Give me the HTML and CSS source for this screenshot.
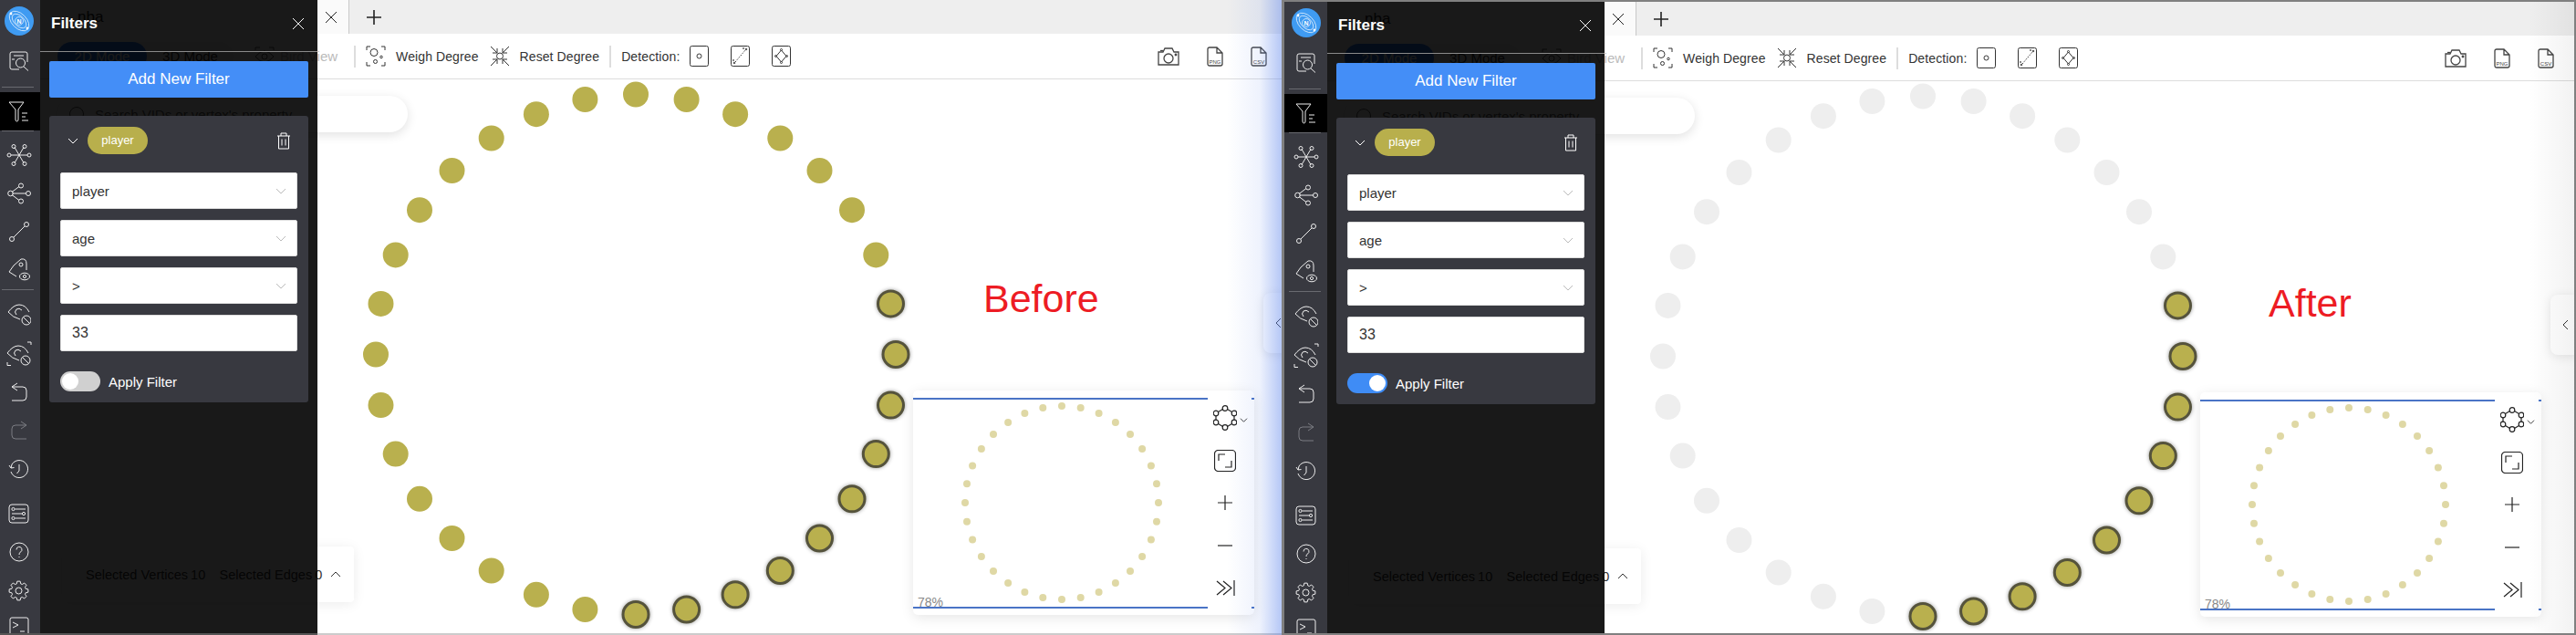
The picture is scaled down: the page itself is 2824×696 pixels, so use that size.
FILE: index.html
```html
<!DOCTYPE html>
<html lang="en">
<head>
<meta charset="utf-8">
<title>Filters: before and after</title>
<link rel="stylesheet" href="styles.css">
</head>
<body>
<svg class="sprite" aria-hidden="true">
  <defs>
    <symbol id="i-logo" viewBox="0 0 32 32">
      <circle class="logo-bg" cx="16" cy="16" r="16"/>
      <g class="logo-lines">
        <ellipse cx="16" cy="16" rx="13" ry="8" transform="rotate(45 16 16)"/>
        <ellipse cx="16" cy="16" rx="9.5" ry="5.5" transform="rotate(45 16 16)"/>
        <circle cx="16" cy="16" r="4.5"/>
      </g>
      <circle class="logo-dot" cx="7" cy="8" r="1.4"/>
      <circle class="logo-dot" cx="25" cy="24" r="1.4"/>
      <text class="logo-n" x="16" y="18.5">N</text>
    </symbol>
    <symbol id="i-search" viewBox="0 0 22 22">
      <path d="M11 20H3Q1 20 1 18V3Q1 1 3 1H18Q20 1 20 3V12"/>
      <path d="M5 5H16M3 9H6M16 17L21 21.5"/>
      <circle cx="12.5" cy="13" r="5"/>
    </symbol>
    <symbol id="i-filter" viewBox="0 0 24 23">
      <path d="M1 1H17L11 9V20Q11 22 9.5 22Q8 22 8 20V9Z"/>
      <path d="M15 13H21M15 17H19M15 21H22"/>
    </symbol>
    <symbol id="i-star" viewBox="0 0 28 24">
      <path d="M5 12H23M9 3.5L19 20.500M19 3.500L9 20.500"/>
      <circle cx="3" cy="12" r="2"/><circle cx="25" cy="12" r="2"/>
      <circle cx="8" cy="2.500" r="2"/><circle cx="20" cy="2.500" r="2"/>
      <circle cx="8" cy="21.500" r="2"/><circle cx="20" cy="21.500" r="2"/>
    </symbol>
    <symbol id="i-share" viewBox="0 0 26 24">
      <path d="M5.500 12H20.500M5 10.500L11 6Q12 5 13 4.500M5 13.500L11 18Q12 19 13 19.500"/>
      <circle cx="3.500" cy="12" r="2.800"/><circle cx="15" cy="3.500" r="2.500"/>
      <circle cx="23" cy="12" r="2.500"/><circle cx="15" cy="20.500" r="2.500"/>
    </symbol>
    <symbol id="i-edge" viewBox="0 0 24 24">
      <circle cx="4" cy="20" r="2.500"/><circle cx="20" cy="4" r="2.500"/>
      <path d="M6 18L18 6"/>
    </symbol>
    <symbol id="i-tag" viewBox="0 0 24 26">
      <path d="M14 1L6 8L1 15L9 20M14 1Q20 0 20 6V13"/>
      <circle cx="14" cy="7" r="2"/>
      <ellipse cx="18" cy="20" rx="5.500" ry="3.800"/>
      <circle cx="18" cy="20" r="1.600"/>
    </symbol>
    <symbol id="i-eyeban" viewBox="0 0 26 24">
      <path d="M1 9Q7 1 13 1Q20 1 24 9M1 9Q6 15 14 17M16 7Q13 4 10 6Q7 9 10 12"/>
      <circle cx="21" cy="18" r="5"/>
      <path d="M17.500 14.500L24.500 21.500"/>
    </symbol>
    <symbol id="i-eyeban2" viewBox="0 0 28 27">
      <path d="M1 13Q7 5 13 5Q20 5 24 13M1 13Q6 19 14 21M16 11Q13 8 10 10Q7 13 10 16"/>
      <circle cx="21" cy="21" r="5"/>
      <path d="M17.500 17.500L24.500 24.500M23 1H27V4M1 23V26.500H5"/>
    </symbol>
    <symbol id="i-undo" viewBox="0 0 18 21">
      <path d="M7 1L1 5L7 9M1 5H13Q17 5 17 9V16Q17 20 13 20H1"/>
    </symbol>
    <symbol id="i-redo" viewBox="0 0 18 21">
      <path d="M11 1L17 5L11 9M17 5H5Q1 5 1 9V16Q1 20 5 20H17"/>
    </symbol>
    <symbol id="i-history" viewBox="0 0 23 22">
      <path d="M3 13A9.500 9.500 0 1 0 4 5L3 9M3 9L6.500 8.500M3 9L1 6"/>
      <path d="M12 5V12L9.500 15"/>
    </symbol>
    <symbol id="i-settings" viewBox="0 0 23 22">
      <rect x="1" y="1" width="21" height="20" rx="3"/>
      <path d="M7.500 6H19M4 11H15M7.500 16H19"/>
      <circle cx="5.500" cy="6" r="1.600"/><circle cx="17" cy="11" r="1.600"/><circle cx="5.500" cy="16" r="1.600"/>
    </symbol>
    <symbol id="i-help" viewBox="0 0 22 22">
      <circle cx="11" cy="11" r="10"/>
      <path d="M8 8.500A3 3 0 1 1 12.500 11Q11 12 11 14M11 16V17"/>
    </symbol>
    <symbol id="i-gear" viewBox="-11.500 -11.500 23 23">
      <polygon points="7.690,-2.200 10.370,-1.640 10.370,1.640 7.690,2.200 7,3.880 8.490,6.170 6.170,8.490 3.880,7 2.200,7.690 1.640,10.370 -1.640,10.370 -2.200,7.690 -3.880,7 -6.170,8.490 -8.490,6.170 -7,3.880 -7.690,2.200 -10.370,1.640 -10.370,-1.640 -7.690,-2.200 -7,-3.880 -8.490,-6.170 -6.170,-8.490 -3.880,-7 -2.200,-7.690 -1.640,-10.370 1.640,-10.370 2.200,-7.690 3.880,-7 6.170,-8.490 8.490,-6.170 7,-3.880"/>
      <circle r="3.500"/>
    </symbol>
    <symbol id="i-term" viewBox="0 0 22 26">
      <rect x="1" y="1" width="20" height="24" rx="2"/>
      <path d="M4 6L10 9L4 12M12 16H17"/>
    </symbol>
    <symbol id="i-close" viewBox="0 0 14 14"><path d="M1 1L13 13M13 1L1 13"/></symbol>
    <symbol id="i-plus" viewBox="0 0 16 16"><path d="M8 0V16M0 8H16"/></symbol>
    <symbol id="i-minus" viewBox="0 0 16 16"><path d="M0 8H16"/></symbol>
    <symbol id="i-down" viewBox="0 0 12 7"><path d="M1 1L6 6L11 1"/></symbol>
    <symbol id="i-up" viewBox="0 0 12 7"><path d="M1 6L6 1L11 6"/></symbol>
    <symbol id="i-left" viewBox="0 0 7 12"><path d="M6 1L1 6L6 11"/></symbol>
    <symbol id="i-trash" viewBox="0 0 14 19">
      <path d="M0 4H14M4 4V1H10V4M1.500 4V18H12.500V4M5 7.500V14.500M9 7.500V14.500"/>
    </symbol>
    <symbol id="i-eye" viewBox="0 0 22 22">
      <path d="M1 11Q6 5 11 5Q16 5 21 11Q16 17 11 17Q6 17 1 11Z"/>
      <circle cx="11" cy="11" r="3"/>
      <path d="M1 4V1H6M16 1H21V4M1 18V21H6M16 21H21V18"/>
    </symbol>
    <symbol id="i-weigh" viewBox="0 0 22 23">
      <path d="M1 5V1H5M17 1H21V5M1 18V22H5M17 22H21V18"/>
      <circle cx="9" cy="7.500" r="4"/><circle cx="17" cy="12.500" r="1.300"/><circle cx="10.500" cy="17.500" r="2"/>
    </symbol>
    <symbol id="i-reset" viewBox="0 0 22 23">
      <circle cx="11" cy="11.500" r="3.500"/>
      <path d="M1 1L8 8M8 3V8H3M21 1L14 8M14 3V8H19M1 22L8 15M8 20V15H3M21 22L14 15M14 20V15H19"/>
    </symbol>
    <symbol id="i-det1" viewBox="0 0 21 23">
      <rect x="0.500" y="0.500" width="20" height="22" rx="2"/><circle cx="10.500" cy="11.500" r="2.500"/>
    </symbol>
    <symbol id="i-det2" viewBox="0 0 21 23">
      <rect x="0.500" y="0.500" width="20" height="22" rx="2"/>
      <path class="det-line" d="M5 18L16 5"/><circle cx="4" cy="19" r="0.800"/><circle cx="17" cy="4" r="0.800"/><circle cx="14" cy="3" r="0.500"/><circle cx="3" cy="16" r="0.500"/>
    </symbol>
    <symbol id="i-det3" viewBox="0 0 21 23">
      <rect x="0.500" y="0.500" width="20" height="22" rx="2"/>
      <path d="M10.500 5L16 11.500L10.500 18L5 11.500Z"/>
      <circle cx="10.500" cy="4.500" r="1"/><circle cx="16.500" cy="11.500" r="1"/><circle cx="10.500" cy="18.500" r="1"/><circle cx="4.500" cy="11.500" r="1"/>
    </symbol>
    <symbol id="i-camera" viewBox="0 0 24 20">
      <path d="M1 5H6L8 1H16L18 5H23V19H1Z"/><circle cx="12" cy="12" r="5"/><circle cx="20" cy="8" r="0.800"/><path d="M3 3.500H6"/>
    </symbol>
    <symbol id="i-png" viewBox="0 0 18 22">
      <path d="M3 1H11L17 7V19Q17 21 15 21H3Q1 21 1 19V3Q1 1 3 1ZM11 1V7H17"/>
      <text class="file-text" x="9" y="18.500">PNG</text>
    </symbol>
    <symbol id="i-csv" viewBox="0 0 18 22">
      <path d="M3 1H11L17 7V19Q17 21 15 21H3Q1 21 1 19V3Q1 1 3 1ZM11 1V7H17"/>
      <text class="file-text" x="9" y="18.500">CSV</text>
    </symbol>
    <symbol id="i-layout" viewBox="0 0 26 28">
      <path d="M13 3L23 9V19L13 25L3 19V9Z"/>
      <g class="layout-dots">
        <circle cx="13" cy="3.500" r="2.800"/><circle cx="23" cy="9" r="2.800"/><circle cx="23" cy="19" r="2.800"/>
        <circle cx="13" cy="24.500" r="2.800"/><circle cx="3" cy="19" r="2.800"/><circle cx="3" cy="9" r="2.800"/>
      </g>
    </symbol>
    <symbol id="i-fit" viewBox="0 0 24 24">
      <rect x="0.500" y="0.500" width="23" height="23" rx="4"/>
      <path d="M5 12V5H12M19 12V19H12"/>
    </symbol>
    <symbol id="i-end" viewBox="0 0 21 17">
      <path d="M1 1L10 8.500L1 16M8 1L17 8.500L8 16M20 0V17"/>
    </symbol>

    <g id="ring-plain">
      <circle cx="0" cy="-285" r="14"/><circle cx="55.600" cy="-279.500" r="14"/><circle cx="109.100" cy="-263.300" r="14"/>
      <circle cx="158.300" cy="-237" r="14"/><circle cx="201.500" cy="-201.500" r="14"/><circle cx="237" cy="-158.300" r="14"/>
      <circle cx="263.300" cy="-109.100" r="14"/><circle cx="-55.600" cy="279.500" r="14"/><circle cx="-109.100" cy="263.300" r="14"/>
      <circle cx="-158.300" cy="237" r="14"/><circle cx="-201.500" cy="201.500" r="14"/><circle cx="-237" cy="158.300" r="14"/>
      <circle cx="-263.300" cy="109.100" r="14"/><circle cx="-279.500" cy="55.600" r="14"/><circle cx="-285" cy="0" r="14"/>
      <circle cx="-279.500" cy="-55.600" r="14"/><circle cx="-263.300" cy="-109.100" r="14"/><circle cx="-237" cy="-158.300" r="14"/>
      <circle cx="-201.500" cy="-201.500" r="14"/><circle cx="-158.300" cy="-237" r="14"/><circle cx="-109.100" cy="-263.300" r="14"/>
      <circle cx="-55.600" cy="-279.500" r="14"/>
    </g>
    <g id="ring-selected">
      <circle cx="279.500" cy="-55.600" r="14"/><circle cx="285" cy="0" r="14"/><circle cx="279.500" cy="55.600" r="14"/>
      <circle cx="263.300" cy="109.100" r="14"/><circle cx="237" cy="158.300" r="14"/><circle cx="201.500" cy="201.500" r="14"/>
      <circle cx="158.300" cy="237" r="14"/><circle cx="109.100" cy="263.300" r="14"/><circle cx="55.600" cy="279.500" r="14"/>
      <circle cx="0" cy="285" r="14"/>
    </g>
    <g id="ring-mini">
      <circle cx="0" cy="-106" r="4"/><circle cx="20.700" cy="-104" r="4"/><circle cx="40.600" cy="-97.900" r="4"/><circle cx="58.900" cy="-88.100" r="4"/>
      <circle cx="75" cy="-75" r="4"/><circle cx="88.100" cy="-58.900" r="4"/><circle cx="97.900" cy="-40.600" r="4"/><circle cx="104" cy="-20.700" r="4"/>
      <circle cx="106" cy="0" r="4"/><circle cx="104" cy="20.700" r="4"/><circle cx="97.900" cy="40.600" r="4"/><circle cx="88.100" cy="58.900" r="4"/>
      <circle cx="75" cy="75" r="4"/><circle cx="58.900" cy="88.100" r="4"/><circle cx="40.600" cy="97.900" r="4"/><circle cx="20.700" cy="104" r="4"/>
      <circle cx="0" cy="106" r="4"/><circle cx="-20.700" cy="104" r="4"/><circle cx="-40.600" cy="97.900" r="4"/><circle cx="-58.900" cy="88.100" r="4"/>
      <circle cx="-75" cy="75" r="4"/><circle cx="-88.100" cy="58.900" r="4"/><circle cx="-97.900" cy="40.600" r="4"/><circle cx="-104" cy="20.700" r="4"/>
      <circle cx="-106" cy="0" r="4"/><circle cx="-104" cy="-20.700" r="4"/><circle cx="-97.900" cy="-40.600" r="4"/><circle cx="-88.100" cy="-58.900" r="4"/>
      <circle cx="-75" cy="-75" r="4"/><circle cx="-58.900" cy="-88.100" r="4"/><circle cx="-40.600" cy="-97.900" r="4"/><circle cx="-20.700" cy="-104" r="4"/>
    </g>
  </defs>
</svg>

<section class="shot shot-before">
  <div class="app">
    <nav class="rail">
      <div class="rail-logo"><svg class="logo"><use href="#i-logo"/></svg></div>
      <div class="rail-item"><svg class="ic w22 h22"><use href="#i-search"/></svg></div>
      <hr class="rail-sep rail-sep-a">
      <div class="rail-item rail-active"><svg class="ic w24 h23"><use href="#i-filter"/></svg></div>
      <hr class="rail-sep rail-sep-b">
      <div class="rail-item rail-first"><svg class="ic w28 h24"><use href="#i-star"/></svg></div>
      <div class="rail-item"><svg class="ic w26 h24"><use href="#i-share"/></svg></div>
      <div class="rail-item"><svg class="ic w24 h24"><use href="#i-edge"/></svg></div>
      <div class="rail-item"><svg class="ic w24 h26"><use href="#i-tag"/></svg></div>
      <hr class="rail-sep rail-sep-c">
      <div class="rail-item"><svg class="ic w26 h24"><use href="#i-eyeban"/></svg></div>
      <div class="rail-item"><svg class="ic w28 h27"><use href="#i-eyeban2"/></svg></div>
      <div class="rail-item"><svg class="ic w18 h21"><use href="#i-undo"/></svg></div>
      <div class="rail-item rail-off"><svg class="ic w18 h21"><use href="#i-redo"/></svg></div>
      <div class="rail-item rail-history"><svg class="ic w23 h22"><use href="#i-history"/></svg></div>
      <div class="rail-item rail-settings"><svg class="ic w23 h22"><use href="#i-settings"/></svg></div>
      <div class="rail-item"><svg class="ic w22 h22"><use href="#i-help"/></svg></div>
      <div class="rail-item"><svg class="ic w23 h23"><use href="#i-gear"/></svg></div>
      <div class="rail-item"><svg class="ic w22 h26"><use href="#i-term"/></svg></div>
    </nav>

    <main class="main">
      <div class="tabs">
        <div class="tab"><span class="tab-name">nba</span><svg class="ic w14 h14"><use href="#i-close"/></svg></div>
        <svg class="ic w16 h16 tab-add"><use href="#i-plus"/></svg>
      </div>
      <div class="toolbar">
        <div class="modes"><span class="mode mode-on">2D Mode</span><span class="mode">3D Mode</span></div>
        <svg class="ic w22 h22 bird-icon"><use href="#i-eye"/></svg>
        <span class="bird">Bird View</span>
        <i class="tool-sep tool-sep-a"></i>
        <svg class="ic w22 h23"><use href="#i-weigh"/></svg>
        <span class="tool-text">Weigh Degree</span>
        <svg class="ic w22 h23"><use href="#i-reset"/></svg>
        <span class="tool-text tool-text-last">Reset Degree</span>
        <i class="tool-sep"></i>
        <span class="tool-label">Detection:</span>
        <svg class="ic w21 h23"><use href="#i-det1"/></svg>
        <svg class="ic w21 h23 det"><use href="#i-det2"/></svg>
        <svg class="ic w21 h23 det"><use href="#i-det3"/></svg>
        <div class="exports">
          <svg class="ic w24 h20 export-ic"><use href="#i-camera"/></svg>
          <svg class="ic w18 h22 export-ic"><use href="#i-png"/></svg>
          <svg class="ic w18 h22 export-ic"><use href="#i-csv"/></svg>
        </div>
      </div>
    </main>

    <svg class="graph graph-before">
      <use class="node-plain" href="#ring-plain" x="700" y="388.500"/>
      <use class="node-selected" href="#ring-selected" x="700" y="388.500"/>
    </svg>

    <div class="search"><i class="search-ring"></i><span>Search VIDs or vertex's property</span></div>
    <div class="note note-before">Before</div>
    <div class="side-tab"><svg class="ic w7 h12"><use href="#i-left"/></svg></div>
    <div class="selection">
      <span>Selected Vertices</span><b>10</b>
      <span class="selection-edges">Selected Edges</span><b>0</b>
      <svg class="ic w12 h7 selection-up"><use href="#i-up"/></svg>
    </div>

    <div class="minimap">
      <svg class="mini-graph"><use class="mini-dots" href="#ring-mini" x="163" y="123"/></svg>
      <i class="view-line view-line-top"></i><i class="view-line view-line-bottom"></i>
      <span class="zoom-level">78%</span>
      <div class="mini-tools">
        <div class="mini-tool"><svg class="ic w26 h28"><use href="#i-layout"/></svg><svg class="ic w9 h5 mini-caret"><use href="#i-down"/></svg></div>
        <div class="mini-tool"><svg class="ic w24 h24"><use href="#i-fit"/></svg></div>
        <div class="mini-tool"><svg class="ic w16 h16"><use href="#i-plus"/></svg></div>
        <div class="mini-tool"><svg class="ic w16 h16"><use href="#i-minus"/></svg></div>
        <div class="mini-tool"><svg class="ic w21 h17"><use href="#i-end"/></svg></div>
      </div>
    </div>

    <aside class="drawer">
      <header class="drawer-head"><h2>Filters</h2><svg class="ic w14 h14"><use href="#i-close"/></svg></header>
      <div class="drawer-body">
        <button class="add-filter">Add New Filter</button>
        <div class="filter-card">
          <div class="filter-head">
            <svg class="ic w12 h7"><use href="#i-down"/></svg>
            <span class="pill">player</span>
            <svg class="ic w14 h19 trash"><use href="#i-trash"/></svg>
          </div>
          <div class="field"><span>player</span><svg class="ic w12 h7 caret"><use href="#i-down"/></svg></div>
          <div class="field"><span>age</span><svg class="ic w12 h7 caret"><use href="#i-down"/></svg></div>
          <div class="field"><span>&gt;</span><svg class="ic w12 h7 caret"><use href="#i-down"/></svg></div>
          <div class="field field-value"><span>33</span></div>
          <div class="apply"><span class="switch"><i></i></span><span>Apply Filter</span></div>
        </div>
      </div>
    </aside>
  </div>
</section>

<section class="shot shot-after">
  <div class="app">
    <nav class="rail">
      <div class="rail-logo"><svg class="logo"><use href="#i-logo"/></svg></div>
      <div class="rail-item"><svg class="ic w22 h22"><use href="#i-search"/></svg></div>
      <hr class="rail-sep rail-sep-a">
      <div class="rail-item rail-active"><svg class="ic w24 h23"><use href="#i-filter"/></svg></div>
      <hr class="rail-sep rail-sep-b">
      <div class="rail-item rail-first"><svg class="ic w28 h24"><use href="#i-star"/></svg></div>
      <div class="rail-item"><svg class="ic w26 h24"><use href="#i-share"/></svg></div>
      <div class="rail-item"><svg class="ic w24 h24"><use href="#i-edge"/></svg></div>
      <div class="rail-item"><svg class="ic w24 h26"><use href="#i-tag"/></svg></div>
      <hr class="rail-sep rail-sep-c">
      <div class="rail-item"><svg class="ic w26 h24"><use href="#i-eyeban"/></svg></div>
      <div class="rail-item"><svg class="ic w28 h27"><use href="#i-eyeban2"/></svg></div>
      <div class="rail-item"><svg class="ic w18 h21"><use href="#i-undo"/></svg></div>
      <div class="rail-item rail-off"><svg class="ic w18 h21"><use href="#i-redo"/></svg></div>
      <div class="rail-item rail-history"><svg class="ic w23 h22"><use href="#i-history"/></svg></div>
      <div class="rail-item rail-settings"><svg class="ic w23 h22"><use href="#i-settings"/></svg></div>
      <div class="rail-item"><svg class="ic w22 h22"><use href="#i-help"/></svg></div>
      <div class="rail-item"><svg class="ic w23 h23"><use href="#i-gear"/></svg></div>
      <div class="rail-item"><svg class="ic w22 h26"><use href="#i-term"/></svg></div>
    </nav>

    <main class="main">
      <div class="tabs">
        <div class="tab"><span class="tab-name">nba</span><svg class="ic w14 h14"><use href="#i-close"/></svg></div>
        <svg class="ic w16 h16 tab-add"><use href="#i-plus"/></svg>
      </div>
      <div class="toolbar">
        <div class="modes"><span class="mode mode-on">2D Mode</span><span class="mode">3D Mode</span></div>
        <svg class="ic w22 h22 bird-icon"><use href="#i-eye"/></svg>
        <span class="bird">Bird View</span>
        <i class="tool-sep tool-sep-a"></i>
        <svg class="ic w22 h23"><use href="#i-weigh"/></svg>
        <span class="tool-text">Weigh Degree</span>
        <svg class="ic w22 h23"><use href="#i-reset"/></svg>
        <span class="tool-text tool-text-last">Reset Degree</span>
        <i class="tool-sep"></i>
        <span class="tool-label">Detection:</span>
        <svg class="ic w21 h23"><use href="#i-det1"/></svg>
        <svg class="ic w21 h23 det"><use href="#i-det2"/></svg>
        <svg class="ic w21 h23 det"><use href="#i-det3"/></svg>
        <div class="exports">
          <svg class="ic w24 h20 export-ic"><use href="#i-camera"/></svg>
          <svg class="ic w18 h22 export-ic"><use href="#i-png"/></svg>
          <svg class="ic w18 h22 export-ic"><use href="#i-csv"/></svg>
        </div>
      </div>
    </main>

    <svg class="graph graph-after">
      <use class="node-plain" href="#ring-plain" x="700" y="388.500"/>
      <use class="node-selected" href="#ring-selected" x="700" y="388.500"/>
    </svg>

    <div class="search"><i class="search-ring"></i><span>Search VIDs or vertex's property</span></div>
    <div class="note note-after">After</div>
    <div class="side-tab"><svg class="ic w7 h12"><use href="#i-left"/></svg></div>
    <div class="selection">
      <span>Selected Vertices</span><b>10</b>
      <span class="selection-edges">Selected Edges</span><b>0</b>
      <svg class="ic w12 h7 selection-up"><use href="#i-up"/></svg>
    </div>

    <div class="minimap">
      <svg class="mini-graph"><use class="mini-dots" href="#ring-mini" x="163" y="123"/></svg>
      <i class="view-line view-line-top"></i><i class="view-line view-line-bottom"></i>
      <span class="zoom-level">78%</span>
      <div class="mini-tools">
        <div class="mini-tool"><svg class="ic w26 h28"><use href="#i-layout"/></svg><svg class="ic w9 h5 mini-caret"><use href="#i-down"/></svg></div>
        <div class="mini-tool"><svg class="ic w24 h24"><use href="#i-fit"/></svg></div>
        <div class="mini-tool"><svg class="ic w16 h16"><use href="#i-plus"/></svg></div>
        <div class="mini-tool"><svg class="ic w16 h16"><use href="#i-minus"/></svg></div>
        <div class="mini-tool"><svg class="ic w21 h17"><use href="#i-end"/></svg></div>
      </div>
    </div>

    <aside class="drawer">
      <header class="drawer-head"><h2>Filters</h2><svg class="ic w14 h14"><use href="#i-close"/></svg></header>
      <div class="drawer-body">
        <button class="add-filter">Add New Filter</button>
        <div class="filter-card">
          <div class="filter-head">
            <svg class="ic w12 h7"><use href="#i-down"/></svg>
            <span class="pill">player</span>
            <svg class="ic w14 h19 trash"><use href="#i-trash"/></svg>
          </div>
          <div class="field"><span>player</span><svg class="ic w12 h7 caret"><use href="#i-down"/></svg></div>
          <div class="field"><span>age</span><svg class="ic w12 h7 caret"><use href="#i-down"/></svg></div>
          <div class="field"><span>&gt;</span><svg class="ic w12 h7 caret"><use href="#i-down"/></svg></div>
          <div class="field field-value"><span>33</span></div>
          <div class="apply"><span class="switch switch-on"><i></i></span><span>Apply Filter</span></div>
        </div>
      </div>
    </aside>
  </div>
</section>
</body>
</html>
```
FILE: styles.css
```css
* { box-sizing: border-box; }
html, body { margin: 0; height: 100%; }
body {
  display: flex;
  width: 2824px;
  height: 696px;
  overflow: hidden;
  background: #fff;
  font-family: "Liberation Sans", Arial, sans-serif;
  color: #333;
}
.sprite { position: absolute; width: 0; height: 0; }

/* the two pasted screenshots */
.shot { position: relative; height: 696px; overflow: hidden; flex: none; }
.shot::after { content: ""; position: absolute; top: 0; bottom: 0; right: 0; pointer-events: none; z-index: 9; }
.shot-before { width: 1405px; background: linear-gradient(to right, #555 348px, #ccc 348px); }
.shot-before::after { width: 60px; background: linear-gradient(to right, rgba(90, 130, 235, 0), rgba(90, 130, 235, .1) 60%, rgba(90, 130, 235, .45)); }
.shot-before .app { margin-left: -3px; height: 694px; }
.shot-after { width: 1419px; border: solid #808080; border-width: 2px 2px 2px 3px; }
.shot-after::after { width: 50px; background: linear-gradient(to right, rgba(0, 0, 0, 0), rgba(0, 0, 0, .05)); }
.shot-after .app { height: 692px; }

.app { position: relative; display: flex; width: 1414px; background: #fff; overflow: hidden; }

/* generic icon */
.ic { display: block; flex: none; fill: none; stroke: currentColor; stroke-width: 1; overflow: visible; }
.w7 { width: 7px; } .w9 { width: 9px; } .w12 { width: 12px; } .w14 { width: 14px; } .w16 { width: 16px; }
.w18 { width: 18px; } .w21 { width: 21px; } .w22 { width: 22px; } .w23 { width: 23px; } .w24 { width: 24px; }
.w26 { width: 26px; } .w28 { width: 28px; }
.h5 { height: 5px; } .h7 { height: 7px; } .h12 { height: 12px; } .h14 { height: 14px; } .h16 { height: 16px; }
.h17 { height: 17px; } .h19 { height: 19px; } .h20 { height: 20px; } .h21 { height: 21px; } .h22 { height: 22px; }
.h23 { height: 23px; } .h24 { height: 24px; } .h26 { height: 26px; } .h27 { height: 27px; } .h28 { height: 28px; }

/* left rail */
.rail {
  position: relative;
  z-index: 5;
  flex: none;
  width: 47px;
  background: #383940;
  color: #eee;
  overflow: hidden;
}
.rail-logo { height: 46px; display: flex; align-items: center; justify-content: center; }
.logo { width: 32px; height: 32px; display: block; fill: none; }
.logo-bg { fill: #3f9bf2; stroke: none; }
.logo-lines { stroke: #fff; stroke-width: .8; opacity: .85; }
.logo-dot { fill: #fff; stroke: none; }
.logo-n { fill: #fff; stroke: none; font: 700 7px "Liberation Sans", sans-serif; text-anchor: middle; }
.rail-item { height: 42px; display: flex; align-items: center; justify-content: center; }
.rail-sep { display: block; height: 1px; margin: 0 7px 0 5px; border: 0; background: #696a70; }
.rail-sep-a { margin-top: 7px; margin-bottom: 5px; }
.rail-sep-b { margin-top: 0; }
.rail-sep-c { margin-top: 0; margin-bottom: 6px; }
.rail-active { background: #000; }
.rail-first { margin-top: 5px; }
.rail-off { color: #7b7c82; }
.rail-history { margin-top: 2px; }
.rail-settings { margin-top: 6px; }

/* main column beneath the drawer */
.main { flex: 1; min-width: 0; display: flex; flex-direction: column; }
.tabs { flex: none; height: 37px; display: flex; align-items: center; background: #eee; color: #222; }
.tab {
  width: 339px;
  height: 37px;
  display: flex;
  align-items: center;
  justify-content: space-between;
  padding: 0 12px 0 41px;
  background: #fafafa;
  border-right: 1px solid #c9c9c9;
  color: #222;
}
.tab-name { font-size: 17px; }
.tab-add { margin-left: 19px; stroke-width: 1.6; }

.toolbar {
  flex: none;
  height: 50px;
  display: flex;
  align-items: center;
  padding: 0 22px 0 19px;
  border-bottom: 1px solid #ddd;
  font-size: 14px;
  color: #333;
}
.modes { display: flex; align-items: center; height: 31px; border-radius: 16px; background: #f3f3f3; }
.mode { width: 95px; height: 31px; line-height: 31px; text-align: center; font-size: 15px; border-radius: 16px; }
.mode-on { width: 98px; background: #2f7cf0; color: #fff; }
.bird-icon { margin-left: 23px; color: #555; }
.bird { margin-left: 6px; font-size: 15px; color: #bbb; white-space: nowrap; }
.tool-sep { display: block; flex: none; width: 2px; height: 24px; margin: 0 11px; background: #ddd; }
.tool-sep-a { margin-left: 18px; }
.tool-text { margin: 0 12px 0 11px; letter-spacing: .1px; white-space: nowrap; }
.tool-text-last { margin-right: 0; }
.tool-label { margin-right: 11px; letter-spacing: .13px; }
.det { margin-left: 24px; }
.det-line { stroke-dasharray: 1.5 1.5; }
.exports { margin-left: auto; display: flex; align-items: center; gap: 30px; color: #444; }
.export-ic { stroke-width: 1.3; }
.file-text { fill: #444; stroke: none; font: 400 6px "Liberation Sans", sans-serif; text-anchor: middle; }

/* canvas */
.graph { position: absolute; left: 0; top: 0; width: 1414px; height: 694px; pointer-events: none; overflow: hidden; }
.node-plain { fill: #b9b04e; }
.graph-after .node-plain { fill: #eee; }
.node-selected { fill: #b9b04e; stroke: #55533c; stroke-width: 3; filter: drop-shadow(0 0 2px rgba(0, 0, 0, .4)); }

.search {
  position: absolute;
  left: 66px;
  top: 105px;
  width: 384px;
  height: 40px;
  display: flex;
  align-items: center;
  gap: 12px;
  padding-left: 13px;
  background: #fff;
  border-radius: 20px;
  box-shadow: 0 3px 12px rgba(0, 0, 0, .12);
  font-size: 15px;
  color: #666;
}
.search-ring { width: 16px; height: 16px; border: 1px solid #555; border-radius: 50%; }

.note { position: absolute; top: 302px; font-size: 43px; line-height: 50px; color: #ed1c24; }
.note-before { left: 1081px; }
.note-after { left: 1079px; top: 305px; }

.side-tab {
  position: absolute;
  left: 1388px;
  top: 321px;
  width: 30px;
  height: 66px;
  display: flex;
  align-items: center;
  padding-left: 13px;
  background: #fff;
  border-radius: 8px 0 0 8px;
  box-shadow: 0 2px 12px rgba(0, 0, 0, .1);
  color: #333;
}

.selection {
  position: absolute;
  left: 71px;
  top: 599px;
  width: 320px;
  height: 61px;
  display: flex;
  align-items: center;
  padding-left: 26px;
  background: #fff;
  border-radius: 4px;
  box-shadow: 0 2px 14px rgba(0, 0, 0, .08);
  font-size: 14.5px;
  color: #333;
}
.selection b { margin-left: 3px; font-weight: 400; letter-spacing: .2px; }
.selection-edges { margin-left: 15px; }
.selection-up { margin-left: 9px; }

.minimap {
  position: absolute;
  left: 1004px;
  top: 428px;
  width: 374px;
  height: 246px;
  background: #fff;
  border-radius: 5px;
  box-shadow: 0 3px 14px rgba(0, 0, 0, .1);
}
.mini-graph { position: absolute; left: 0; top: 0; width: 323px; height: 246px; }
.mini-dots { fill: #dfd8a5; }
.view-line { position: absolute; left: 0; right: 0; height: 2px; background: #4a74c6; }
.view-line-top { top: 8px; }
.view-line-bottom { top: 237px; }
.zoom-level { position: absolute; left: 5px; top: 224px; font-size: 14px; line-height: 16px; color: #888; }
.mini-tools {
  position: absolute;
  left: 323px;
  top: 6px;
  width: 48px;
  height: 236px;
  padding: 1px 10px 0 0;
  display: flex;
  flex-direction: column;
  align-items: center;
  background: #fff;
  color: #222;
}
.mini-tool { position: relative; height: 46.5px; display: flex; align-items: center; justify-content: center; }
.mini-tool .ic { stroke-width: 1.2; }
.layout-dots { fill: #fff; }
.mini-caret { position: absolute; left: 29px; top: 23px; }

/* drawer over the dimmed page */
.drawer {
  position: absolute;
  left: 47px;
  top: 0;
  bottom: 0;
  z-index: 4;
  width: 304px;
  background: rgba(0, 0, 0, .9);
  color: #fff;
}
.drawer-head {
  height: 57px;
  display: flex;
  align-items: center;
  justify-content: space-between;
  padding: 0 14px 4px 12px;
  border-bottom: 1px solid #8a8a8a;
}
.drawer-head h2 { margin: 0; font-size: 17px; font-weight: 700; }
.drawer-body { padding: 10px 10px 0; }
.add-filter {
  display: block;
  width: 284px;
  height: 40px;
  padding: 0;
  border: 0;
  border-radius: 2px;
  background: #448ef7;
  color: #fff;
  font: 17px "Liberation Sans", Arial, sans-serif;
}
.filter-card {
  margin-top: 20px;
  padding: 12px;
  display: flex;
  flex-direction: column;
  gap: 12px;
  background: #383940;
  border-radius: 3px;
}
.filter-head { height: 30px; margin-bottom: 8px; display: flex; align-items: center; padding-left: 8px; }
.pill {
  width: 66px;
  height: 30px;
  margin-left: 10px;
  text-align: center;
  line-height: 30px;
  border-radius: 15px;
  background: #b8af4c;
  font-size: 13px;
}
.trash { margin-left: auto; margin-right: 8px; }
.field {
  height: 40px;
  display: flex;
  align-items: center;
  justify-content: space-between;
  padding: 0 11px 0 12px;
  background: #fff;
  border: 1px solid #ddd;
  border-radius: 2px;
  color: #333;
  font-size: 15px;
}
.field-value { font-size: 16px; }
.caret { color: #bbb; }
.apply { height: 22px; margin-top: 10px; display: flex; align-items: center; gap: 9px; font-size: 15px; }
.switch { position: relative; width: 44px; height: 22px; border-radius: 11px; background: #d0d0d0; }
.switch i {
  position: absolute;
  left: 2px;
  top: 2px;
  width: 18px;
  height: 18px;
  border-radius: 50%;
  background: #fff;
}
.switch-on { background: #3f8cf5; }
.switch-on i { left: 24px; }
```
